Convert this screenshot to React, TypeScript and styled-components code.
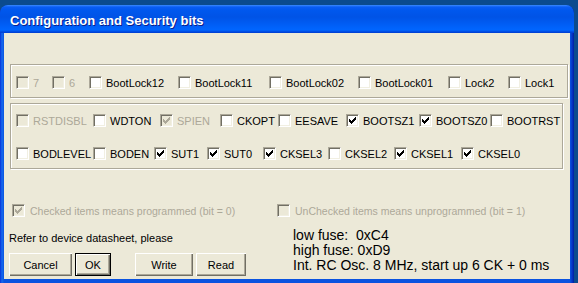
import React from "react";
import styled, { createGlobalStyle } from "styled-components";

const GlobalStyle = createGlobalStyle`
  html, body {
    margin: 0;
    padding: 0;
    background: #0b4b8f;
  }
  body {
    width: 578px;
    height: 283px;
    overflow: hidden;
    font-family: "Liberation Sans", Arial, sans-serif;
  }
`;

const Window = styled.div`
  margin-top: 5px;
  width: 574px;
  height: 278px;
  box-sizing: border-box;
  border-radius: 8px 8px 0 0;
  background: linear-gradient(to right, #0831d9 0px, #166aee 2px, #0a53e0 4px, #0a53e0 570px, #0637c8 572px, #001ea0 574px);
  display: flex;
  flex-direction: column;
  overflow: hidden;
`;

const TitleBar = styled.div`
  height: 28px;
  flex: none;
  box-sizing: border-box;
  padding: 3px 0 0 10px;
  display: flex;
  align-items: center;
  border-radius: 8px 8px 0 0;
  background: linear-gradient(
    to bottom,
    #3b8cff 0px,
    #0a5df5 2px,
    #0058ee 5px,
    #0053e6 12px,
    #0061fa 22px,
    #0066ff 25px,
    #0046dc 27px,
    #003dd0 28px
  );
  color: #fff;
  font-weight: bold;
  font-size: 13px;
  text-shadow: 1px 1px #0a1e8c;
  white-space: nowrap;
`;

const Client = styled.div`
  flex: 1;
  margin: 0 4px 4px 4px;
  background: #ece9d8;
  padding: 31px 0 0 6px;
  display: flex;
  flex-direction: column;
`;

const Group = styled.div<{ $w: number; $pt: number; $mt?: number }>`
  width: ${(p) => p.$w}px;
  box-sizing: border-box;
  margin-top: ${(p) => p.$mt ?? 0}px;
  border: 1px solid #aca899;
  box-shadow: inset 1px 1px #fff, 1px 1px #fff;
  padding: ${(p) => p.$pt}px 0 8px 5px;
  display: flex;
  flex-direction: column;
  gap: 20px;
`;

const Row = styled.div`
  display: flex;
  align-items: center;
  height: 13px;
`;

const CheckItem = styled.div<{ $w?: number; $disabled?: boolean; $small?: boolean }>`
  display: flex;
  align-items: center;
  gap: ${(p) => (p.$small ? 5 : 4)}px;
  flex: none;
  width: ${(p) => (p.$w ? `${p.$w}px` : "auto")};
  font-size: ${(p) => (p.$small ? 10.5 : 11)}px;
  color: ${(p) => (p.$disabled ? "#aca899" : "#000")};
  white-space: nowrap;
`;

const Box = styled.span<{ $disabled?: boolean }>`
  width: 13px;
  height: 13px;
  flex: none;
  box-sizing: border-box;
  border: 1px solid;
  border-color: #aca899 #fff #fff #aca899;
  box-shadow: inset 1px 1px #716f64, inset -1px -1px #f1efe2;
  background: ${(p) => (p.$disabled ? "#ece9d8" : "#fff")};
  padding: 1px;
  display: flex;
`;

const checkCols = [3, 4, 5, 4, 3, 2, 1];

const Check = ({ color }: { color: string }) => (
  <svg width="9" height="9" viewBox="0 0 9 9" shapeRendering="crispEdges">
    {checkCols.map((y, i) => (
      <rect key={i} x={i + 1} y={y} width="1" height="3" fill={color} />
    ))}
  </svg>
);

type Bit = { label: string; w?: number; checked?: boolean; disabled?: boolean; small?: boolean };

const CheckBox = ({ label, w, checked, disabled, small }: Bit) => (
  <CheckItem $w={w} $disabled={disabled} $small={small}>
    <Box $disabled={disabled}>{checked && <Check color={disabled ? "#aca899" : "#000"} />}</Box>
    {label}
  </CheckItem>
);

const lockBits: Bit[] = [
  { label: "7", w: 36, disabled: true },
  { label: "6", w: 37, disabled: true },
  { label: "BootLock12", w: 89 },
  { label: "BootLock11", w: 91 },
  { label: "BootLock02", w: 89 },
  { label: "BootLock01", w: 90 },
  { label: "Lock2", w: 60 },
  { label: "Lock1" },
];

const highBits: Bit[] = [
  { label: "RSTDISBL", w: 77, disabled: true },
  { label: "WDTON", w: 67 },
  { label: "SPIEN", w: 60, checked: true, disabled: true },
  { label: "CKOPT", w: 58 },
  { label: "EESAVE", w: 68 },
  { label: "BOOTSZ1", w: 73, checked: true },
  { label: "BOOTSZ0", w: 71, checked: true },
  { label: "BOOTRST" },
];

const lowBits: Bit[] = [
  { label: "BODLEVEL", w: 77 },
  { label: "BODEN", w: 61 },
  { label: "SUT1", w: 53, checked: true },
  { label: "SUT0", w: 56, checked: true },
  { label: "CKSEL3", w: 65, checked: true },
  { label: "CKSEL2", w: 66 },
  { label: "CKSEL1", w: 67, checked: true },
  { label: "CKSEL0", checked: true },
];

const LegendRow = styled(Row)`
  margin: 35px 0 0 2px;
`;

const Bottom = styled.div`
  display: flex;
  align-items: flex-start;
  margin: 11px 0 0 -1px;
`;

const LeftCol = styled.div`
  width: 284px;
  flex: none;
  display: flex;
  flex-direction: column;
`;

const Note = styled.div`
  margin-top: 4px;
  font-size: 11px;
  line-height: 13px;
  color: #000;
`;

const ButtonRow = styled.div`
  display: flex;
  gap: 3px;
  margin-top: 8px;
`;

const Button = styled.button<{ $w: number; $default?: boolean; $spaced?: boolean }>`
  width: ${(p) => p.$w}px;
  height: 23px;
  box-sizing: border-box;
  margin: 0 0 0 ${(p) => (p.$spaced ? 21 : 0)}px;
  padding: 0;
  font-family: "Liberation Sans", Arial, sans-serif;
  font-size: 11px;
  color: #000;
  background: #ece9d8;
  border: ${(p) => (p.$default ? "1px solid #000" : "none")};
  box-shadow: inset 1px 1px #fff, inset -1px -1px #716f64, inset -2px -2px #aca899;
`;

const FuseInfo = styled.div`
  font-size: 14px;
  line-height: 15px;
  color: #000;
  white-space: pre;
`;

export default function App() {
  return (
    <>
      <GlobalStyle />
      <Window>
        <TitleBar>Configuration and Security bits</TitleBar>
        <Client>
          <Group $w={558} $pt={11}>
            <Row>
              {lockBits.map((b) => (
                <CheckBox key={b.label} {...b} />
              ))}
            </Row>
          </Group>
          <Group $w={553} $pt={10} $mt={5}>
            <Row>
              {highBits.map((b) => (
                <CheckBox key={b.label} {...b} />
              ))}
            </Row>
            <Row>
              {lowBits.map((b) => (
                <CheckBox key={b.label} {...b} />
              ))}
            </Row>
          </Group>
          <LegendRow>
            <CheckBox label="Checked items means programmed (bit = 0)" w={265} checked disabled small />
            <CheckBox label="UnChecked items means unprogrammed (bit = 1)" disabled small />
          </LegendRow>
          <Bottom>
            <LeftCol>
              <Note>Refer to device datasheet, please</Note>
              <ButtonRow>
                <Button $w={63}>Cancel</Button>
                <Button $w={36} $default>
                  OK
                </Button>
                <Button $w={58} $spaced>
                  Write
                </Button>
                <Button $w={50}>Read</Button>
              </ButtonRow>
            </LeftCol>
            <FuseInfo>
              {"low fuse:  0xC4\nhigh fuse: 0xD9\nInt. RC Osc. 8 MHz, start up 6 CK + 0 ms"}
            </FuseInfo>
          </Bottom>
        </Client>
      </Window>
    </>
  );
}
